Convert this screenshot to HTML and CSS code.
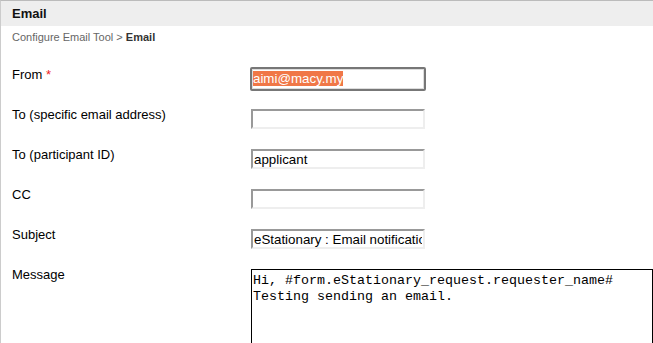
FILE: index.html
```html
<!DOCTYPE html>
<html lang="en">
<head>
  <meta charset="UTF-8" />
  <title>Email</title>
  <link rel="stylesheet" href="styles.css">
</head>
<body>
  <div class="panel">
    <!-- hlavička -->
    <div class="panel-header">Email</div>
    <div class="breadcrumb">Configure Email Tool &gt; <b>Email</b></div>

    <!-- formulář -->
    <div class="form">
      <div class="form-row">
        <label>From <span class="required">*</span></label>
        <div class="field field-focus"><span class="selected">aimi@macy.my</span></div>
      </div>
      <div class="form-row">
        <label>To (specific email address)</label>
        <input type="text" class="field" value="">
      </div>
      <div class="form-row">
        <label>To (participant ID)</label>
        <input type="text" class="field" value="applicant">
      </div>
      <div class="form-row">
        <label>CC</label>
        <input type="text" class="field" value="">
      </div>
      <div class="form-row">
        <label>Subject</label>
        <input type="text" class="field" value="eStationary : Email notification">
      </div>
      <div class="form-row">
        <label>Message</label>
        <textarea class="message">Hi, #form.eStationary_request.requester_name#
Testing sending an email.</textarea>
      </div>
    </div>
  </div>
</body>
</html>
```

FILE: styles.css
```css
body {
  margin: 0;
  font-family: "Liberation Sans", Arial, sans-serif;
  font-size: 13px;
  color: #000;
  background: #fff;
  overflow: hidden;
}
.panel {
  border-top: 1px solid #bbb;
  border-left: 1px solid #ccc;
  min-height: 400px;
}
.panel-header {
  background: #eee;
  height: 25px;
  line-height: 25px;
  padding-left: 11px;
  font-weight: bold;
  font-size: 13px;
  color: #111;
}
.breadcrumb {
  padding-left: 11px;
  margin-top: 4px;
  font-size: 11px;
  line-height: 14px;
  color: #666;
}
.breadcrumb b {
  color: #333;
}

/* === řádky formuláře === */
.form {
  margin-top: 23px;
}
.form-row {
  display: flex;
  align-items: flex-start;
  height: 40px;
}
.form-row label {
  width: 239px;
  padding-left: 11px;
  line-height: 16px;
  flex-shrink: 0;
}
.required {
  color: #e22;
}
.field {
  box-sizing: border-box;
  width: 174px;
  height: 20px;
  margin: 2px 0 0 0;
  padding: 0 1px;
  font-family: "Liberation Sans", Arial, sans-serif;
  font-size: 13.33px;
  color: #000;
  border: 2px solid #eee;
  border-top-color: #999;
  border-left-color: #999;
  background: #fff;
  outline: none;
}
.field-focus {
  width: 176px;
  height: 24px;
  margin: 0 0 0 -1px;
  padding: 2px 1px 0;
  line-height: 16px;
  border: 2px solid #777;
  border-radius: 2px;
  box-shadow: inset 0 0 0 1px #ddd;
}
.selected {
  background: #f07747;
  color: #fff;
}
.message {
  box-sizing: border-box;
  width: 420px;
  height: 120px;
  margin: 2px 0 0 0;
  padding: 3px 2px 3px 1px;
  font-family: "Liberation Mono", "Courier New", monospace;
  font-size: 13.33px;
  line-height: 16px;
  color: #000;
  border: 1px solid #000;
  resize: none;
}
```
